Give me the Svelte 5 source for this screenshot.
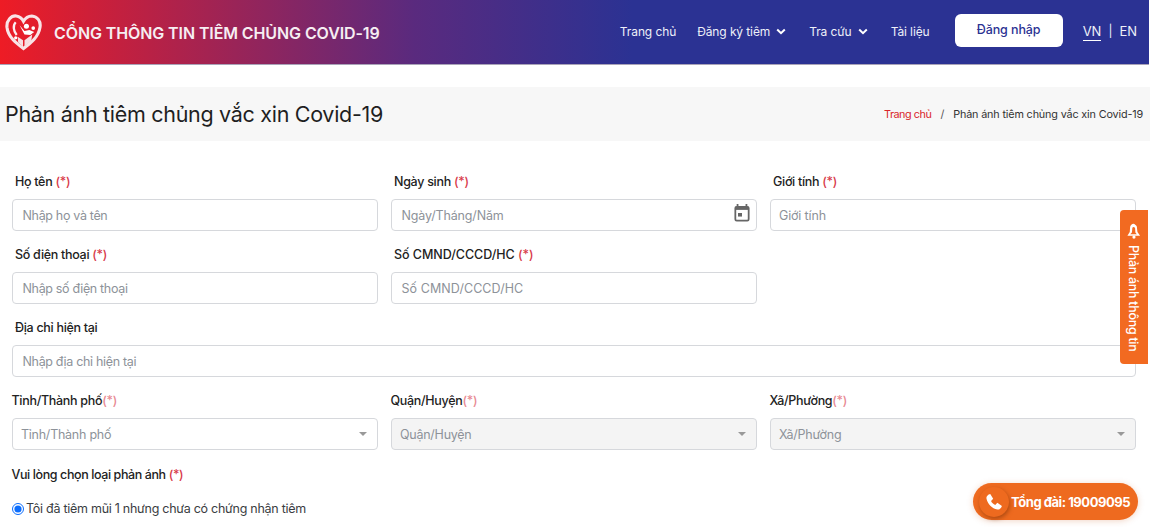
<script>
  const row1 = [
    { label: 'Họ tên', star: ' (*)', ph: 'Nhập họ và tên', kind: 'tight' },
    { label: 'Ngày sinh', star: ' (*)', ph: 'Ngày/Tháng/Năm', cal: true },
    { label: 'Giới tính', star: ' (*)', ph: 'Giới tính', narrow: true }
  ];
  const row2 = [
    { label: 'Số điện thoại', star: ' (*)', ph: 'Nhập số điện thoại', kind: 'tight' },
    { label: 'Số CMND/CCCD/HC', star: ' (*)', ph: 'Số CMND/CCCD/HC', kind: 'caps' }
  ];
  const sel = [
    { label: 'Tỉnh/Thành phố', dis: false },
    { label: 'Quận/Huyện', dis: true },
    { label: 'Xã/Phường', dis: true }
  ];
  const chooseStar = ' (*)';
</script>

<div class="page">
  <header class="top">
    <div class="brand">
      <svg class="logo" viewBox="0 0 38 38" width="37" height="38">
        <path d="M19 36C11 30 3 24 2 14C1.500 7 6.500 2 11.500 2.500C15 3 17.500 5 19 8C21 4.500 24 2.500 27.500 2.500C33 3 37 7.500 36 14C34.500 24 27 30 19 36Z" fill="none" stroke="#f9e3e6" stroke-width="3.200"/>
        <path d="M11 9C8 12 8.500 18 12 22" fill="none" stroke="#fbeef0" stroke-width="2.400"/>
        <circle cx="22" cy="13" r="2.600" fill="#fff"/>
        <circle cx="29" cy="15" r="1.900" fill="#fff"/>
        <circle cx="11" cy="25" r="1.700" fill="#fff"/>
        <path d="M15 12L20 18L25 17L30 19L26 22L20 21.500Z" fill="#fff"/>
        <path d="M13 24L18.500 27.500L18.500 34L13.500 29.500Z" fill="#f6dfe3"/>
        <path d="M20 27.500L28 21.500L27 28L20 34Z" fill="#f6dfe3"/>
      </svg>
      <span class="title">CỔNG THÔNG TIN TIÊM CHỦNG COVID-19</span>
    </div>
    <nav class="nav">
      <span class="item home">Trang chủ</span>
      <span class="item reg">Đăng ký tiêm
        <svg viewBox="0 0 10 7" width="10" height="7"><path d="M1.200 1.500L5 5.200L8.800 1.500" fill="none" stroke="#fff" stroke-width="2"/></svg>
      </span>
      <span class="item look">Tra cứu
        <svg viewBox="0 0 10 7" width="10" height="7"><path d="M1.200 1.500L5 5.200L8.800 1.500" fill="none" stroke="#fff" stroke-width="2"/></svg>
      </span>
      <span class="item docs">Tài liệu</span>
      <button class="login">Đăng nhập</button>
      <div class="lang"><span class="vn">VN</span><span class="bar">|</span><span>EN</span></div>
    </nav>
  </header>

  <div class="crumbbar">
    <h1>Phản ánh tiêm chủng vắc xin Covid-19</h1>
    <div class="crumbs"><span class="red">Trang chủ</span><span class="sep">/</span><span>Phản ánh tiêm chủng vắc xin Covid-19</span></div>
  </div>

  <form class="form">
    <div class="grid">
      {#each row1 as f}
        <div class="field">
          <div class="label">{f.label}<span class="star">{f.star}</span></div>
          <div class="input {f.kind ?? ''}" class:small={f.narrow}>
            <span>{f.ph}</span>
            {#if f.cal}
              <svg class="cal" viewBox="0 0 18 20" width="16" height="18">
                <path d="M4 0V3M14 0V3" stroke="#666" stroke-width="2"/>
                <rect x="1.500" y="3" width="15" height="15.500" rx="1.500" fill="none" stroke="#666" stroke-width="2"/>
                <rect x="1.500" y="3" width="15" height="3.500" fill="#666"/>
                <rect x="4.500" y="10" width="4.500" height="4" fill="#666"/>
              </svg>
            {/if}
          </div>
        </div>
      {/each}
      {#each row2 as f}
        <div class="field">
          <div class="label {f.kind === 'caps' ? 'caps' : ''}">{f.label}<span class="star">{f.star}</span></div>
          <div class="input {f.kind}"><span>{f.ph}</span></div>
        </div>
      {/each}
      <div></div>
      <div class="field wide">
        <div class="label">Địa chỉ hiện tại</div>
        <div class="input tight"><span>Nhập địa chỉ hiện tại</span></div>
      </div>
      {#each sel as s}
        <div class="field">
          <div class="label flush">{s.label}<span class="star pale">(*)</span></div>
          <div class="input select" class:dis={s.dis}>
            <span>{s.label}</span>
            <i class="caret"></i>
          </div>
        </div>
      {/each}
    </div>
    <div class="label flush choose">Vui lòng chọn loại phản ánh<span class="star">{chooseStar}</span></div>
    <label class="radio"><input type="radio" checked />Tôi đã tiêm mũi 1 nhưng chưa có chứng nhận tiêm</label>
  </form>

  <div class="side">
    <svg viewBox="0 0 16 17" width="15" height="16">
      <path d="M6 1.500C7 0.500 9 0.500 9.800 1.700C11.500 2.500 11.800 4 11.800 6L12.200 9.500L15 13.500H1.500L4 9.500L4.300 5.500C4.400 3.500 4.800 2.300 6 1.500ZM6.800 5L6.300 10L4.500 12H11.500L10 10L9.700 5.500C9 4 7.500 4 6.800 5Z" fill="#fff" fill-rule="evenodd"/>
      <circle cx="8.500" cy="15" r="1.700" fill="#fff"/>
    </svg>
    <span>Phản ánh thông tin</span>
  </div>

  <div class="hotline">
    <span class="phone">
      <svg viewBox="0 0 24 24" width="20" height="20"><path d="M7.500 2.500L11 8L8.500 10.800C9 12.500 11.500 15 13.500 15.500L16 13L21.500 16.800C20.500 19.500 18.500 21.500 16 21C9.500 19.500 4.500 14.500 3 8C2.500 5.500 5 3 7.500 2.500Z" fill="#fff"/></svg>
    </span>
    <span class="hottext">Tổng đài: 19009095</span>
  </div>
</div>

<style>
  :global(body) { margin: 0; background: #fff; }
  .page {
    position: relative;
    width: 1150px;
    height: 527px;
    overflow: hidden;
    font-family: Inter, "Noto Sans", sans-serif;
    color: #212529;
  }
  .top {
    height: 64px;
    margin-right: 1px;
    border-bottom: 1px solid #a9a3b8;
    display: flex;
    align-items: center;
    justify-content: space-between;
    background: linear-gradient(90deg, #ee1c25 0%, #5a2a7e 36%, #2b3293 55%, #2b3293 100%);
    color: #fff;
  }
  .brand { display: flex; align-items: center; margin-left: 5px; }
  .logo { margin-right: 12px; }
  .title { font-size: 16px; font-weight: 600; letter-spacing: -0.1px; margin-top: 1px; color: #f6eef2; }
  .nav { display: flex; align-items: center; font-size: 12px; margin-right: 12px; margin-top: -3px; }
  .item { display: inline-flex; align-items: center; gap: 6px; color: #eef0f8; white-space: nowrap; letter-spacing: -0.1px; margin-top: 2px; }
  .home { margin-right: 21px; }
  .reg, .look { margin-right: 23px; }
  .docs { margin-right: 25px; }
  .login {
    width: 108px; height: 33px; background: #fff; border: none; border-radius: 6px;
    font: 500 12.500px Inter, sans-serif; color: #2b3293; padding: 0 0 2px;
    margin-right: 20px; letter-spacing: -0.1px;
  }
  .lang { display: flex; align-items: center; font-size: 13px; color: #eef0f8; }
  .vn { border-bottom: 1px solid #fff; padding-bottom: 1px; margin-top: 2px; }
  .bar { margin: 0 7px; font-size: 12px; }

  .crumbbar {
    margin-top: 22px;
    height: 54px;
    background: #f7f7f7;
    display: flex;
    align-items: center;
    justify-content: space-between;
    padding: 0 7px 0 5px;
  }
  h1 { margin: 0; font-size: 21.500px; font-weight: 400; letter-spacing: -0.3px; color: #1f1f1f; }
  .crumbs { font-size: 10.800px; color: #333; letter-spacing: -0.15px; }
  .red { color: #d9252b; letter-spacing: -0.45px; }
  .sep { margin: 0 9px; color: #555; }

  .form { padding: 0 14px 0 11.500px; }
  .grid {
    display: grid;
    grid-template-columns: 366.500px 366.500px 366px;
    column-gap: 12.500px;
    margin-top: 32px;
  }
  .field { height: 73px; }
  .wide { grid-column: 1 / -1; }
  .label { font-size: 12.500px; font-weight: 500; height: 18px; line-height: 18px; padding-left: 3.500px; margin-bottom: 8px; color: #222; letter-spacing: -0.3px; }
  .label.flush { padding-left: 0; }
  .label.caps { letter-spacing: -0.04px; }
  .star { color: #d83a4a; }
  .star.pale { color: #e88a93; }
  .input {
    box-sizing: border-box; height: 32px; border: 1px solid #d6d8dc; border-radius: 4px;
    display: flex; align-items: center; justify-content: space-between;
    padding: 0 6px 0 10px; font-size: 12.500px; color: #8d9299; letter-spacing: -0.15px;
  }
  .input.tight { letter-spacing: -0.33px; }
  .input.caps { letter-spacing: 0.07px; }
  .input.small { padding-left: 8.500px; }
  .select { padding-left: 8.500px; padding-right: 10px; letter-spacing: -0.25px; }
  .dis { background: #f4f4f4; }
  .caret { width: 0; height: 0; border-left: 4.500px solid transparent; border-right: 4.500px solid transparent; border-top: 4.500px solid #999; }
  .cal { margin-right: 0; margin-bottom: 4px; }
  .choose { margin-top: 1px; margin-bottom: 17px; letter-spacing: -0.4px; }
  .radio { display: flex; align-items: center; font-size: 12.500px; color: #3a3d42; letter-spacing: -0.27px; }
  .radio input { margin: 0 2.500px 0 0; width: 12px; height: 12px; accent-color: #0d6efd; }

  .side {
    position: absolute; left: 1119.500px; top: 210px; width: 28.500px; height: 154px;
    background: #f26a21; border-radius: 4px 0 0 4px;
    display: flex; flex-direction: column; align-items: center; padding-top: 13px; box-sizing: border-box;
    color: #fff; font-size: 12.500px; font-weight: 500;
  }
  .side span { writing-mode: vertical-rl; margin-top: 6px; white-space: nowrap; letter-spacing: -0.3px; }

  .hotline {
    position: absolute; left: 973px; top: 483px; width: 165px; height: 37px;
    border-radius: 19px; background: #ee6a1f;
    display: flex; align-items: center;
    box-shadow: 0 1px 6px rgba(200,90,30,.25);
  }
  .phone {
    width: 30px; height: 30px; margin-left: 6px; border-radius: 50%;
    background: #ee6a1f; box-shadow: 1px 2px 4px rgba(120,50,10,.55);
    display: flex; align-items: center; justify-content: center;
  }
  .hottext { color: #fff; font-size: 13px; font-weight: 700; margin-left: 2px; white-space: nowrap; letter-spacing: -0.45px; }
</style>
